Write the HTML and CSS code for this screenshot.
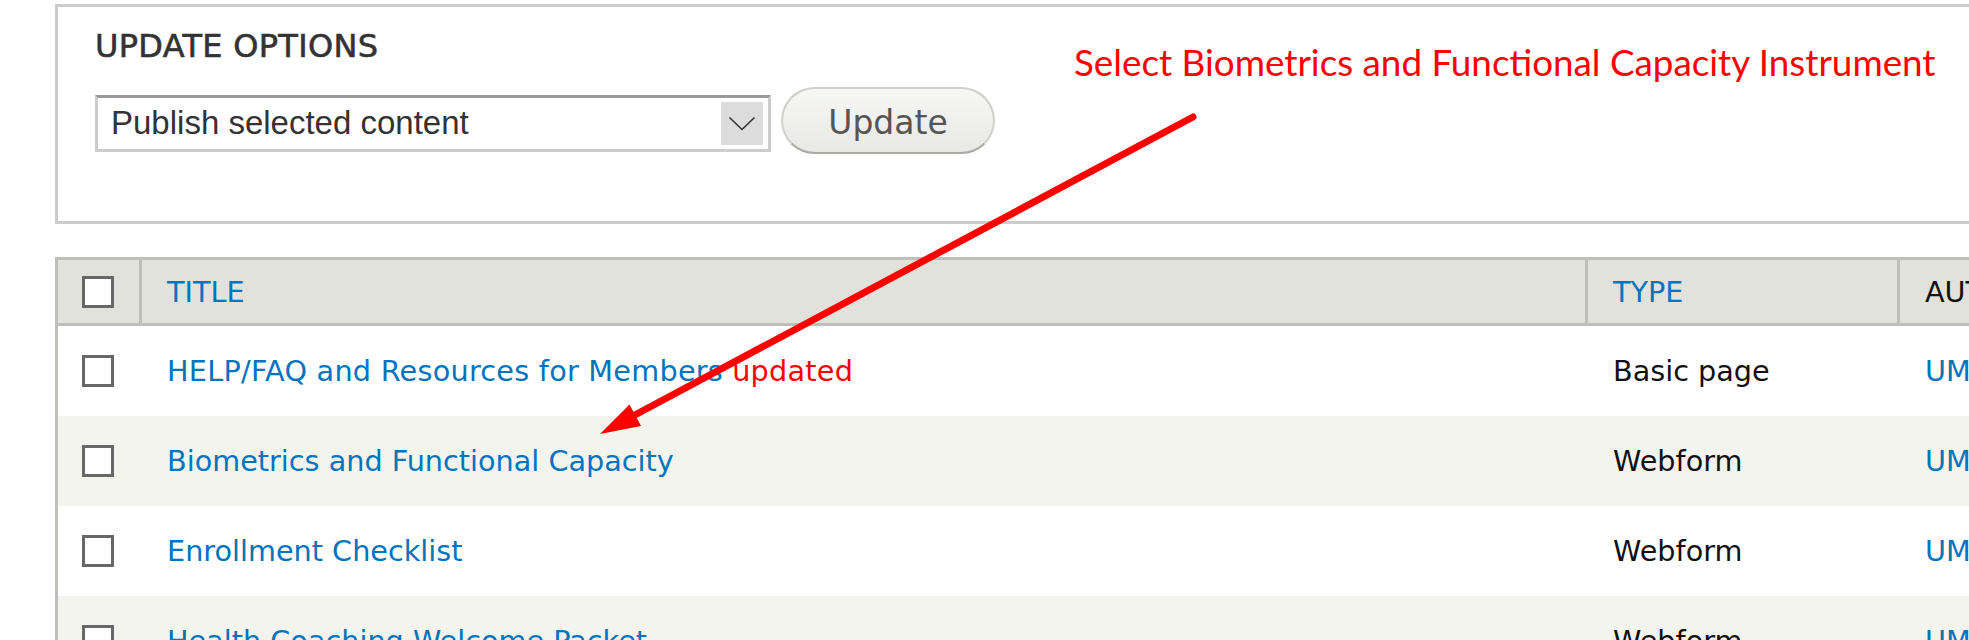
FILE: index.html
```html
<!DOCTYPE html>
<html lang="en">
<head>
<meta charset="utf-8">
<title>Content</title>
<link rel="stylesheet" href="styles.css">
</head>
<body>
<div class="page">
  <div class="fieldset">
    <div class="legend">Update options</div>
    <div class="controls">
      <div class="select">
        <span class="select-text">Publish selected content</span>
        <span class="select-arrow">
          <svg width="28" height="15" viewBox="0 0 28 15"><path d="M1.5 1.5 L14 13.5 L26.5 1.5" fill="none" stroke="#333" stroke-width="1.6"/></svg>
        </span>
      </div>
      <button class="button" type="button">Update</button>
    </div>
  </div>

  <table class="content-table">
    <thead>
      <tr>
        <th class="check"><input class="cb" type="checkbox"></th>
        <th class="col-title"><a href="#">Title</a></th>
        <th class="col-type"><a href="#">Type</a></th>
        <th class="col-author">Author</th>
      </tr>
    </thead>
    <tbody>
      <tr>
        <td class="check"><input class="cb" type="checkbox"></td>
        <td><a class="wide" href="#">HELP/FAQ and Resources for Members</a> <span class="red">updated</span></td>
        <td>Basic page</td>
        <td><a href="#">UMHealth</a></td>
      </tr>
      <tr>
        <td class="check"><input class="cb" type="checkbox"></td>
        <td><a href="#">Biometrics and Functional Capacity</a></td>
        <td>Webform</td>
        <td><a href="#">UMHealth</a></td>
      </tr>
      <tr>
        <td class="check"><input class="cb" type="checkbox"></td>
        <td><a href="#">Enrollment Checklist</a></td>
        <td>Webform</td>
        <td><a href="#">UMHealth</a></td>
      </tr>
      <tr>
        <td class="check"><input class="cb" type="checkbox"></td>
        <td><a href="#">Health Coaching Welcome Packet</a></td>
        <td>Webform</td>
        <td><a href="#">UMHealth</a></td>
      </tr>
    </tbody>
  </table>

  <div class="note">Select Biometrics and Functional Capacity Instrument</div>
  <svg class="arrow" width="1969" height="640" viewBox="0 0 1969 640">
    <line x1="1193" y1="117" x2="633" y2="416" stroke="#ff0000" stroke-width="7" stroke-linecap="round"/>
    <polygon points="600,434 629.5,404.5 641,426" fill="#ff0000"/>
  </svg>
</div>
</body>
</html>
```

FILE: styles.css
```css
html, body {
  margin: 0;
  padding: 0;
  overflow: hidden;
  background: #ffffff;
}

body {
  width: 1969px;
  height: 640px;
  font-family: "DejaVu Sans", "Liberation Sans", sans-serif;
  color: #111111;
}

.page {
  position: relative;
  width: 2100px;
  padding: 4px 0 0 55px;
}

/* Update options fieldset */
.fieldset {
  border: 3px solid #cccccc;
  border-right: 0;
  padding: 19px 0 67px 37px;
}

.legend {
  font-size: 32px;
  line-height: 40px;
  text-transform: uppercase;
  color: #333333;
  letter-spacing: 0.3px;
  -webkit-text-stroke: 0.6px #333333;
}

.controls {
  display: flex;
  align-items: flex-start;
  gap: 10px;
  margin-top: 21px;
}

.select {
  box-sizing: border-box;
  width: 676px;
  height: 57px;
  margin-top: 8px;
  border: 3px solid #cccccc;
  border-top-color: #999999;
  background: #ffffff;
  display: flex;
  align-items: center;
  justify-content: space-between;
  padding: 0 5px 0 13px;
}

.select-text {
  font-family: "Liberation Sans", Arial, sans-serif;
  font-size: 33px;
  color: #333333;
  padding-bottom: 2px;
}

.select-arrow {
  width: 42px;
  height: 43px;
  background: #dcdcdc;
  display: flex;
  align-items: center;
  justify-content: center;
}

.button {
  box-sizing: border-box;
  width: 214px;
  height: 67px;
  border-radius: 34px;
  border: 2px solid #cfcfcc;
  border-bottom-color: #a9a9a6;
  background: linear-gradient(#f7f7f5, #e8e8e5);
  font-family: "DejaVu Sans", sans-serif;
  font-size: 33px;
  color: #555555;
  padding: 4px 0 0 0;
  margin: 0;
}

/* Content table */
.content-table {
  margin-top: 33px;
  border-collapse: separate;
  border-spacing: 0;
  table-layout: fixed;
  width: 2045px;
  border-top: 3px solid #bfbfba;
  border-left: 3px solid #bfbfba;
  font-size: 28.7px;
}

.content-table th {
  box-sizing: border-box;
  height: 66px;
  background: #e1e2dc;
  border-bottom: 3px solid #bfbfba;
  text-align: left;
  font-weight: normal;
  text-transform: uppercase;
  padding: 0 25px;
  line-height: 40px;
  vertical-align: middle;
  color: #111111;
}

.content-table th:not(:last-child) {
  border-right: 3px solid #bfbfba;
}

.content-table th.check { width: 84px; padding-left: 24px; }
.content-table th.col-title { width: 1446px; }
.content-table th.col-type { width: 312px; }
.content-table th.col-author { width: 200px; }

.content-table td {
  height: 90px;
  padding: 0 25px;
  line-height: 40px;
  vertical-align: middle;
  white-space: nowrap;
  overflow: hidden;
}

.content-table td.check { padding-left: 24px; }

.content-table tbody tr:nth-child(even) td {
  background: #f3f4ee;
}

.content-table a {
  color: #0074bd;
  text-decoration: none;
}

.content-table a.wide {
  letter-spacing: 0.25px;
}

.red {
  color: #ff0000;
  letter-spacing: 0.25px;
}

.cb {
  -webkit-appearance: none;
  appearance: none;
  display: block;
  box-sizing: border-box;
  width: 32px;
  height: 32px;
  margin: 0;
  border: 3px solid #676767;
  background: #ffffff;
  border-radius: 0;
}

/* Annotation overlay */
.note {
  position: absolute;
  left: 1074px;
  top: 44px;
  font-family: Lato, "Open Sans", sans-serif;
  font-size: 36.8px;
  line-height: 1;
  color: #ff0000;
  white-space: nowrap;
}

.arrow {
  position: absolute;
  left: 0;
  top: 0;
  pointer-events: none;
}
```
